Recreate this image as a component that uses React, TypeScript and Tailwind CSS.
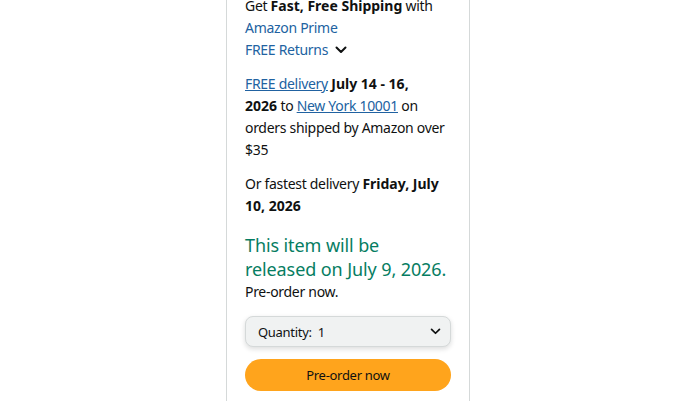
import React from "react";

const Chevron = ({ className }: { className?: string }) => (
  <svg className={className} viewBox="0 0 12 8" fill="none" stroke="currentColor" strokeWidth={2} strokeLinecap="round" strokeLinejoin="round">
    <path d="M1.5 1.5 L6 6 L10.5 1.5" />
  </svg>
);

export default function App() {
  return (
    <div className="w-full h-[401px] overflow-hidden bg-white flex justify-center pr-[2px]" style={{ fontFamily: '"Noto Sans", Arial, sans-serif' }}>
      <div className="w-[244px] shrink-0 h-[420px] border-x border-[#d5d9d9] px-[18px] -mt-[5px] text-[14px] leading-[22px] tracking-[-0.3px] text-[#0f1111]">
        <div className="pr-[6px]">
          <div>
            Get <span className="font-bold tracking-normal">Fast, Free Shipping</span> with
          </div>
          <div className="text-[#2162a1]">Amazon Prime</div>
          <div className="flex items-center text-[#2162a1]">
            FREE Returns
            <Chevron className="w-[12px] h-[8px] ml-[7px] text-[#0f1111]" />
          </div>
        </div>
        <div className="mt-[12px] pr-[6px]">
          <a className="text-[#2162a1] underline">FREE delivery</a>{" "}
          <span className="font-bold tracking-normal">
            July 14 - 16,
            <br />
            2026
          </span>{" "}
          to <a className="text-[#2162a1] underline">New York 10001</a> on orders shipped by Amazon over $35
        </div>
        <div className="mt-[12px] pr-[6px]">
          Or fastest delivery <span className="font-bold tracking-normal">Friday, July 10, 2026</span>
        </div>
        <div className="mt-[16px] text-[18px] leading-[24px] tracking-[-0.1px] text-[#067d62]">
          This item will be released on July 9, 2026.
        </div>
        <div>Pre-order now.</div>
        <div className="mt-[13px] h-[31px] rounded-[8px] border border-[#d5d9d9] bg-[#f0f2f2] shadow-[0_2px_5px_rgba(15,17,17,0.15)] flex items-center justify-between pl-[12px] pr-[9px] text-[13px]">
          <span>Quantity:&nbsp;&nbsp;1</span>
          <Chevron className="w-[11px] h-[7px] text-[#0f1111]" />
        </div>
        <div className="mt-[12px] h-[32px] rounded-full bg-[#ffa41c] flex items-center justify-center text-[13px]">
          Pre-order now
        </div>
      </div>
    </div>
  );
}
